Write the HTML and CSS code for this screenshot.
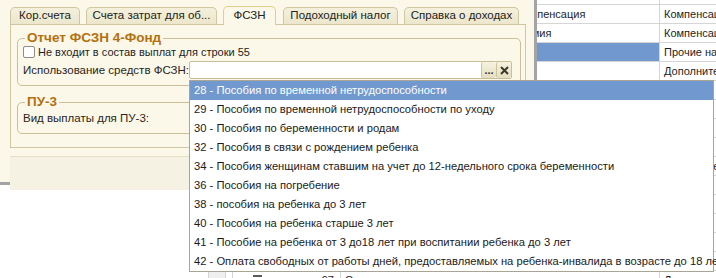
FILE: index.html
```html
<!DOCTYPE html>
<html lang="ru">
<head>
  <meta charset="UTF-8" />
  <title>Начисления — ФСЗН</title>
  <link rel="stylesheet" href="styles.css">
</head>
<body>
  <div class="desk">
    <div class="grid">
      <div class="row r0"><div class="c0"></div><div class="c1"></div><div class="c2"></div><div class="c3"></div><div class="c4"></div><div class="c5"><span>Пособие по уходу</span></div></div>
      <div class="row"><div class="c0"></div><div class="c1"></div><div class="c2"></div><div class="c3"></div><div class="c4">Выплата при увольнении, прочая компенсация</div><div class="c5">Компенсация</div></div>
      <div class="row"><div class="c0"></div><div class="c1"></div><div class="c2"></div><div class="c3"></div><div class="c4">Доплаты за сверхурочные часы, премия</div><div class="c5">Компенсация</div></div>
      <div class="row"><div class="c0"></div><div class="c1"></div><div class="c2"></div><div class="c3"></div><div class="c4 sel"></div><div class="c5">Прочие начисления</div></div>
      <div class="row"><div class="c0"></div><div class="c1"></div><div class="c2"></div><div class="c3"></div><div class="c4"></div><div class="c5">Дополнительные</div></div>
      <div class="row"><div class="c0"></div><div class="c1"></div><div class="c2"></div><div class="c3"></div><div class="c4"></div><div class="c5">Премия</div></div>
      <div class="row"><div class="c0"></div><div class="c1"></div><div class="c2"></div><div class="c3"></div><div class="c4"></div><div class="c5">Прочие</div></div>
      <div class="row"><div class="c0"></div><div class="c1"></div><div class="c2"></div><div class="c3"></div><div class="c4"></div><div class="c5">Прочие</div></div>
      <div class="row"><div class="c0"></div><div class="c1"></div><div class="c2"></div><div class="c3"></div><div class="c4"></div><div class="c5">Премии</div></div>
      <div class="row"><div class="c0"></div><div class="c1"></div><div class="c2"></div><div class="c3"></div><div class="c4"></div><div class="c5">Отпускные</div></div>
      <div class="row"><div class="c0"></div><div class="c1"></div><div class="c2"></div><div class="c3"></div><div class="c4"></div><div class="c5">Оплата</div></div>
      <div class="row"><div class="c0"></div><div class="c1"></div><div class="c2"></div><div class="c3"></div><div class="c4"></div><div class="c5">Прочие</div></div>
      <div class="row"><div class="c0"></div><div class="c1"></div><div class="c2"></div><div class="c3"></div><div class="c4"></div><div class="c5">Премии</div></div>
      <div class="row"><div class="c0"></div><div class="c1"></div><div class="c2"></div><div class="c3"></div><div class="c4"></div><div class="c5">Доплаты</div></div>
      <div class="row"><div class="c0"></div><div class="c1"></div><div class="c2"></div><div class="c3"></div><div class="c4"></div><div class="c5">Пособия</div></div>
      <div class="row"><div class="c0"></div><div class="c1 shade"></div><div class="c2"></div><div class="c3 num"><span class="ico"></span>97</div><div class="c4">Совмещение</div><div class="c5">Доплаты</div></div>
    </div>

    <div class="window">
      <div class="tabs">
        <div class="tab t1">Кор.счета</div>
        <div class="tab t2">Счета затрат для об...</div>
        <div class="tab t3 active">ФСЗН</div>
        <div class="tab t4">Подоходный налог</div>
        <div class="tab t5">Справка о доходах</div>
      </div>
      <div class="panel">
        <fieldset class="group g1">
          <legend>Отчет ФСЗН 4-Фонд</legend>
          <label class="check"><span class="box"></span>Не входит в состав выплат для строки 55</label>
          <div class="field">
            <span class="field-label">Использование средств ФСЗН:</span>
            <div class="input">
              <span class="input-text"></span>
              <span class="btn dots">...</span>
              <span class="btn clear">
                <svg width="9" height="9" viewBox="0 0 9 9"><path d="M1 1L8 8M8 1L1 8" stroke="#3a3a2a" stroke-width="2" /></svg>
              </span>
            </div>
          </div>
        </fieldset>
        <fieldset class="group g2">
          <legend>ПУ-3</legend>
          <div class="field">
            <span class="field-label">Вид выплаты для ПУ-3:</span>
          </div>
        </fieldset>
      </div>
      <div class="footer"></div>
    </div>

    <ul class="dropdown">
      <li class="current">28 - Пособия по временной нетрудоспособности</li>
      <li>29 - Пособия по временной нетрудоспособности по уходу</li>
      <li>30 - Пособия по беременности и родам</li>
      <li>32 - Пособия в связи с рождением ребенка</li>
      <li>34 - Пособия женщинам ставшим на учет до 12-недельного срока беременности</li>
      <li>36 - Пособия на погребение</li>
      <li>38 - пособия на ребенка до 3 лет</li>
      <li>40 - Пособия на ребенка старше 3 лет</li>
      <li>41 - Пособие на ребенка от 3 до18 лет при воспитании ребенка до 3 лет</li>
      <li>42 - Оплата свободных от работы дней, предоставляемых на ребенка-инвалида в возрасте до 18 лет</li>
    </ul>
  </div>
</body>
</html>
```

FILE: styles.css
```css
:root {
  --beige: #fbf8ea;
  --tab: #ece6cc;
  --line: #cfc6a2;
  --title: #b5700e;
  --sel: #7199cf;
  --grid: #d5d5d5;
  --text: #1e1e1e;
}

* {
  box-sizing: border-box;
}

body {
  margin: 0;
  font-family: 'Liberation Sans', Arial, sans-serif;
  font-size: 11px;
  color: var(--text);
}

.desk {
  position: relative;
  width: 716px;
  height: 278px;
  overflow: hidden;
  background: #fff;
}

/* table behind the form */
.grid {
  width: 800px;
}

.row {
  display: flex;
  height: 19px;
  line-height: 18px;
}

.row.r0 {
  height: 5px;
}

.r0 span {
  display: block;
  margin-top: -14px;
}

.row > div {
  white-space: nowrap;
  overflow: hidden;
}

.c1, .c2, .c3, .c4, .c5 {
  border-left: 1px solid var(--grid);
  border-bottom: 1px solid var(--grid);
}

.c0 { width: 208px; }
.c1 { width: 17px; }
.c2 { width: 7px; }
.c3 { width: 108px; }
.c4 { width: 319px; padding-left: 4px; }
.c5 { width: 141px; padding-left: 4px; }

.c4.sel {
  background: var(--sel);
}

.c1.shade {
  background: #efefef;
}

.c3.num {
  display: flex;
  justify-content: space-between;
  padding: 0 6px 0 20px;
}

.ico {
  width: 9px;
  height: 8px;
  margin-top: 4px;
  border-top: 2px solid #5a5a5a;
}

/* form window */
.window {
  position: absolute;
  left: 0;
  top: 0;
  width: 537px;
  height: 185px;
  background: var(--beige);
  border-right: 3px solid #a4a4a4;
  border-bottom: 3px solid #a4a4a4;
  padding: 6px 0 0 10px;
}

.tabs {
  display: flex;
  align-items: flex-end;
  height: 18px;
}

.tab {
  height: 17px;
  line-height: 15px;
  text-align: center;
  border: 1px solid var(--line);
  border-bottom: none;
  border-radius: 5px 5px 0 0;
  background: linear-gradient(#f4f0dc, var(--tab));
  margin-right: 6px;
  color: #222;
  font-size: 11.5px;
}

.t1 { width: 70px; }
.t2 { width: 131px; }
.t3 { width: 53px; margin-right: 7px; }
.t4 { width: 115px; }
.t5 { width: 115px; }

.tab.active {
  height: 19px;
  line-height: 17px;
  margin-bottom: -1px;
  background: var(--beige);
  border-color: #e2cf8c;
  position: relative;
  z-index: 1;
}

.panel {
  width: 516px;
  height: 124px;
  border: 1px solid var(--line);
  background: var(--beige);
  padding: 0 4px 0 6px;
}

.group {
  margin: 0;
  border: 1px solid #c9bf99;
  border-radius: 5px;
  padding: 0 7px 0 5px;
}

.group legend {
  color: var(--title);
  font-weight: bold;
  font-size: 13.5px;
  line-height: 14px;
  padding: 0 2px;
  margin-left: 2px;
}

.g1 {
  margin-top: 6px;
  height: 55px;
}

.g2 {
  margin-top: 9px;
  height: 39px;
}

.check {
  display: flex;
  align-items: center;
  height: 13px;
  gap: 3px;
  font-size: 11px;
}

.box {
  width: 12px;
  height: 12px;
  border: 1px solid #8d8d86;
  border-radius: 2px;
  background: #fff;
}

.field {
  display: flex;
  align-items: center;
  height: 18px;
  margin-top: 3px;
}

.g2 .field {
  margin-top: 0;
}

.field-label {
  width: 166px;
  color: #2a2418;
  font-size: 11.5px;
  white-space: nowrap;
}

.input {
  display: flex;
  width: 323px;
  height: 18px;
  border: 1px solid #c7bd96;
  border-radius: 2px;
  background: #fff;
}

.input-text {
  flex: 1;
}

.btn {
  width: 15px;
  display: flex;
  align-items: center;
  justify-content: center;
  border-left: 1px solid #cbc29c;
  background: linear-gradient(#f6f2df, #e5dec1);
  border-radius: 2px;
  color: #333;
  font-weight: bold;
  font-size: 11px;
  line-height: 10px;
}

.dots {
  align-items: flex-end;
  padding-bottom: 3px;
}

.footer {
  height: 34px;
  margin-top: 8px;
  border-top: 1px solid #e6dfc6;
  background: #f5f2e4;
}

/* drop-down list */
.dropdown {
  position: absolute;
  left: 189px;
  top: 80px;
  width: 525px;
  height: 192px;
  margin: 0;
  padding: 0;
  list-style: none;
  background: #fff;
  border: 1px solid #a9a594;
}

.dropdown li {
  height: 19px;
  line-height: 19px;
  padding-left: 4px;
  white-space: nowrap;
  color: #1a1a1a;
  font-size: 11.2px;
}

.dropdown li.current {
  background: var(--sel);
  color: #fff;
}
```
